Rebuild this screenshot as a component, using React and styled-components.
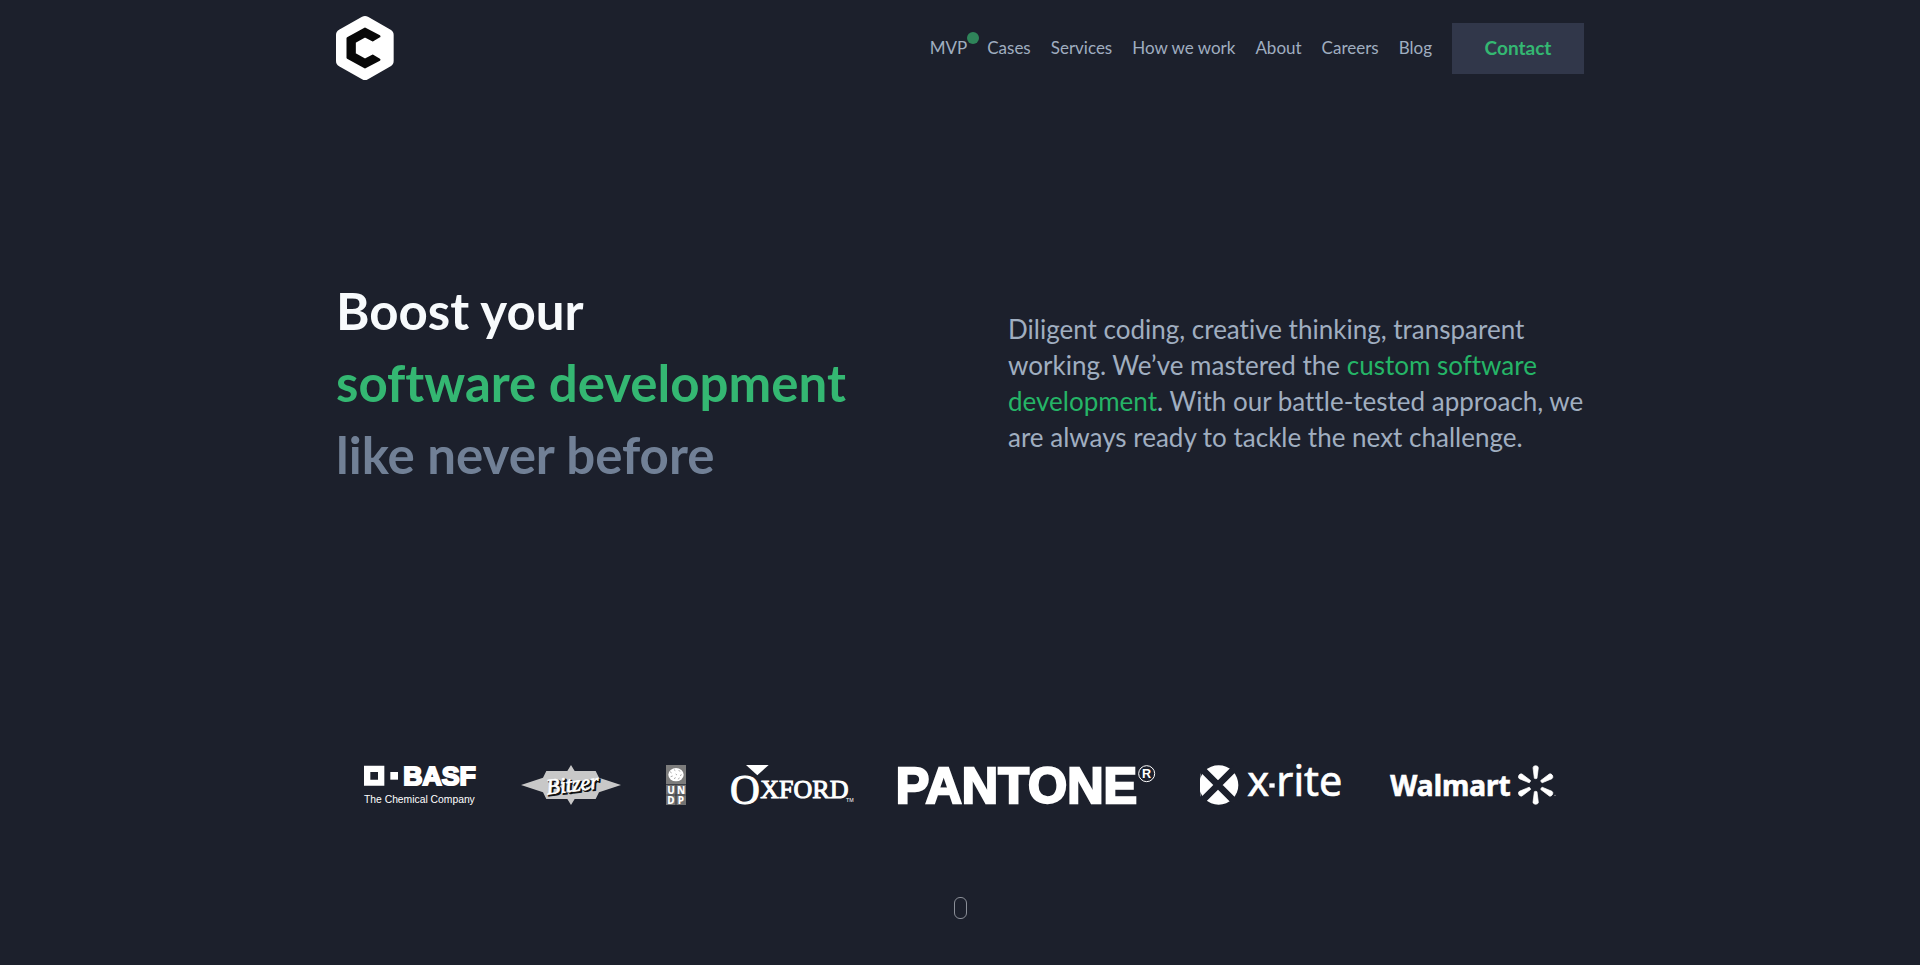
import React from "react";
import styled, { createGlobalStyle } from "styled-components";

const GlobalStyle = createGlobalStyle`
  *, *::before, *::after { box-sizing: border-box; }
  body {
    margin: 0;
    background: #1c202c;
    color: #a0aec0;
    font-family: Lato, "Open Sans", sans-serif;
    font-size: 17px;
    font-variant-ligatures: none;
    line-height: 24px;
  }
`;

const Page = styled.div`
  display: flex;
  flex-direction: column;
  min-height: 100vh;
`;

const Container = styled.div`
  width: 100%;
  max-width: 1280px;
  margin: 0 auto;
  padding: 0 16px;
`;

const Header = styled(Container).attrs({ as: "header" })`
  display: flex;
  align-items: center;
  justify-content: space-between;
  height: 96px;
`;

const HomeLink = styled.a`
  display: block;
  height: 64px;
`;

const Nav = styled.nav`
  display: flex;
  align-items: center;
  gap: 20px;
`;

const NavList = styled.ul`
  display: flex;
  gap: 20px;
  margin: 0;
  padding: 0;
  list-style: none;
`;

const NavLink = styled.a`
  position: relative;
  color: #a0aec0;
  text-decoration: none;
  white-space: nowrap;
`;

const Dot = styled.span`
  position: absolute;
  top: -5px;
  left: 100%;
  width: 12px;
  height: 12px;
  border-radius: 50%;
  background: #2f855a;
`;

const ContactButton = styled.button`
  min-width: 132px;
  height: 51px;
  padding: 0 32px;
  border: 0;
  background: #31374a;
  color: #34b772;
  font: inherit;
  font-size: 19px;
  font-weight: 700;
  cursor: pointer;
`;

const Hero = styled(Container).attrs({ as: "main" })`
  flex: 1;
  display: grid;
  grid-template-columns: 1fr 1fr;
  align-items: center;
  gap: 96px;
`;

const Headline = styled.h1`
  margin: 0;
  color: #f7fafc;
  font-size: 51px;
  font-weight: 700;
  line-height: 72px;
`;

const HeadlineLine = styled.span`
  display: block;
  color: ${(p) => p.$color};
`;

const Intro = styled.p`
  margin: 0 -8px 0 0;
  font-size: 26px;
  line-height: 36px;
`;

const IntroLink = styled.a`
  color: #25b567;
  text-decoration: none;
`;

const Clients = styled(Container).attrs({ as: "ul" })`
  display: flex;
  flex-wrap: wrap;
  justify-content: center;
  gap: 45px;
  margin-top: 96px;
  list-style: none;
`;

const Client = styled.li`
  height: 40px;
`;

const LogoSvg = styled.svg`
  display: block;
  overflow: visible;
`;

const Footer = styled.footer`
  display: flex;
  justify-content: center;
  padding: 92px 0 46px;
`;

const ScrollHint = styled.span`
  width: 13px;
  height: 22px;
  border: 1px solid #8b8f98;
  border-radius: 6px;
`;

const navItems = ["MVP", "Cases", "Services", "How we work", "About", "Careers", "Blog"];

const sans = '"Liberation Sans", Arial, sans-serif';
const serif = '"Liberation Serif", serif';
const humanist = '"Noto Sans", sans-serif';

function Logo({ width, label, children }) {
  return (
    <LogoSvg width={width} height="40" viewBox={`0 0 ${width * 3} 120`} fill="#fff" role="img" aria-label={label}>
      {children}
    </LogoSvg>
  );
}

function BrandMark() {
  return (
    <LogoSvg width="58" height="64" viewBox="0 0 174 192" role="img" aria-label="Home">
      <path d="M87 18 155 57V135L87 174 18 135V57Z" fill="#fff" stroke="#fff" strokeWidth="36" strokeLinejoin="round" />
      <path
        d="M87 38 130 61 110 73 87 61 56 78V114L87 131 110 119 130 131 87 154 35 125V67Z"
        fill="#080808"
        stroke="#080808"
        strokeWidth="7"
        strokeLinejoin="round"
      />
    </LogoSvg>
  );
}

function Basf() {
  return (
    <Logo width={112} label="BASF">
      <path d="M0 2H61V62H0ZM19 21V44H42V21Z" fillRule="evenodd" />
      <path d="M79 21H102V44H79Z" />
      <text x="118" y="61" fontFamily={sans} fontWeight="700" fontSize="80" stroke="#fff" strokeWidth="6">BASF</text>
      <text x="0" y="115" fontFamily={sans} fontSize="31">The Chemical Company</text>
    </Logo>
  );
}

function Bitzer() {
  return (
    <Logo width={100} label="Bitzer">
      <path
        d="M0 60 66 38 76 18H139L150 0 161 18H224L234 38 300 60 234 82 224 102H161L150 120 139 102H76L66 82Z"
        fill="#c8c8c8"
      />
      <g fontFamily={serif} fontStyle="italic" fontSize="66" transform="rotate(-7 150 60)">
        <text x="80" y="84" fill="#111" stroke="#111" strokeWidth="5">Bitzer</text>
        <text x="76" y="80" stroke="#fff" strokeWidth="2">Bitzer</text>
      </g>
    </Logo>
  );
}

function Undp() {
  return (
    <Logo width={20} label="UNDP">
      <path d="M0 0H60V58H0Z" fill="#7c7c7c" />
      <path d="M0 60H29V89H0ZM31 60H60V89H31ZM0 91H29V120H0ZM31 91H60V120H31Z" fill="#727272" />
      <ellipse cx="30" cy="29" rx="23" ry="20" />
      <path
        d="M12 20 17 24M24 14 28 17M38 15 42 20M14 35 20 33M29 27 33 30M42 32 47 29M24 41 29 38M37 43 40 38"
        stroke="#7c7c7c"
        strokeWidth="2"
      />
      <g fontFamily={humanist} fontWeight="800" fontSize="30" textAnchor="middle">
        <text x="15" y="86">U</text>
        <text x="45" y="86">N</text>
        <text x="15" y="117">D</text>
        <text x="45" y="117">P</text>
      </g>
    </Logo>
  );
}

function Oxford() {
  return (
    <Logo width={122} label="Oxford">
      <path d="M45 0H113L79 31Z" />
      <g fontFamily={serif} stroke="#fff" strokeWidth="3">
        <text x="-3" y="118" fontSize="124">O</text>
        <text x="88" y="100" fontSize="78">XFORD</text>
      </g>
      <text x="345" y="110" fontFamily={sans} fontSize="16">TM</text>
    </Logo>
  );
}

function Pantone() {
  return (
    <Logo width={257} label="Pantone">
      <text x="-7" y="113" fontFamily={sans} fontWeight="700" fontSize="151" stroke="#fff" strokeWidth="7">PANTONE</text>
      <circle cx="746" cy="26" r="24" fill="none" stroke="#fff" strokeWidth="3" />
      <text x="746" y="40" fontFamily={sans} fontWeight="700" fontSize="38" textAnchor="middle">R</text>
    </Logo>
  );
}

function XRite() {
  return (
    <Logo width={146} label="x-rite">
      <clipPath id="xrite-disc">
        <path d="M0 0H120V120H0Z" />
      </clipPath>
      <g clipPath="url(#xrite-disc)">
        <circle cx="56" cy="60" r="59" />
        <path d="M-6 0 114 120M-6 120 114 0" stroke="#1c202c" strokeWidth="20" />
        <path d="M0 26V94" stroke="#fff" strokeWidth="2" />
      </g>
      <g fontFamily={humanist} fontSize="124" stroke="#fff" strokeWidth="2">
        <text x="142" y="92">x</text>
        <text x="229" y="92">rite</text>
      </g>
      <path d="M208 55H224V68H208Z" />
    </Logo>
  );
}

function Walmart() {
  return (
    <Logo width={165} label="Walmart">
      <text x="-2" y="92" fontFamily={humanist} fontWeight="700" fontSize="84" stroke="#fff" strokeWidth="2">Walmart</text>
      {[0, 60, 120, 180, 240, 300].map((angle) => (
        <path
          key={angle}
          d="M430 40 426 8Q427 2 434 2T442 8L438 40Q434 42 430 40Z"
          stroke="#fff"
          strokeWidth="2"
          transform={`rotate(${angle} 434 60)`}
        />
      ))}
      <circle cx="492" cy="91" r="2" opacity="0.6" />
    </Logo>
  );
}

const clients = [Basf, Bitzer, Undp, Oxford, Pantone, XRite, Walmart];

export default function App() {
  return (
    <Page>
      <GlobalStyle />
      <Header>
        <HomeLink href="#home">
          <BrandMark />
        </HomeLink>
        <Nav>
          <NavList>
            {navItems.map((item) => (
              <li key={item}>
                <NavLink href="#">
                  {item}
                  {item === "MVP" && <Dot />}
                </NavLink>
              </li>
            ))}
          </NavList>
          <ContactButton type="button">Contact</ContactButton>
        </Nav>
      </Header>
      <Hero>
        <Headline>
          <HeadlineLine $color="#f7fafc">Boost your</HeadlineLine>
          <HeadlineLine $color="#34b772">software development</HeadlineLine>
          <HeadlineLine $color="#718096">like never before</HeadlineLine>
        </Headline>
        <Intro>
          Diligent coding, creative thinking, transparent working. We’ve mastered the{" "}
          <IntroLink href="#">custom software development</IntroLink>. With our battle-tested approach, we are always
          ready to tackle the next challenge.
        </Intro>
      </Hero>
      <Clients>
        {clients.map((ClientLogo, index) => (
          <Client key={index}>
            <ClientLogo />
          </Client>
        ))}
      </Clients>
      <Footer>
        <ScrollHint />
      </Footer>
    </Page>
  );
}
